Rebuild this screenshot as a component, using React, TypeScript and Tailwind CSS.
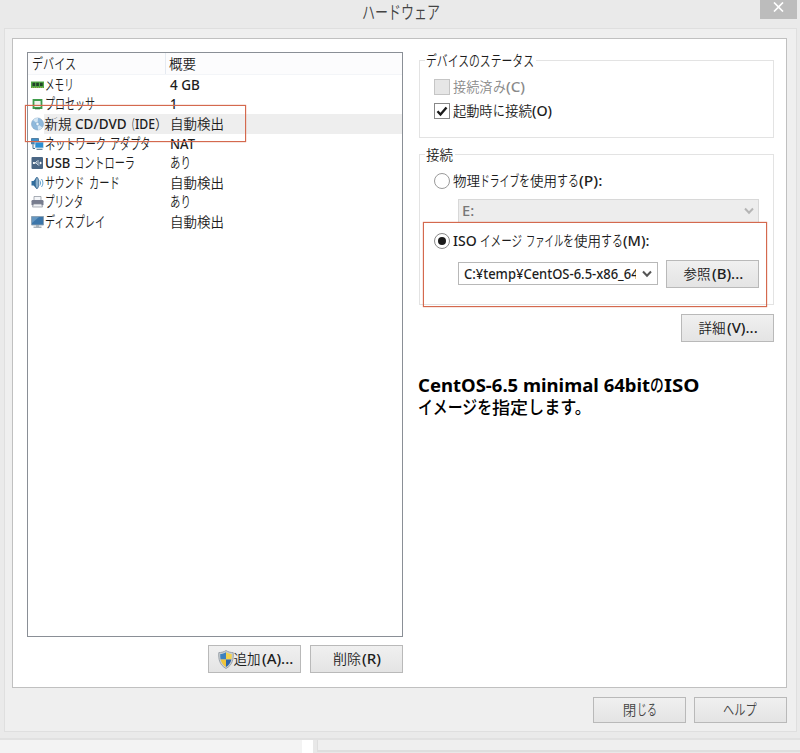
import { useLayoutEffect, useRef, useState } from 'react';
import type { ReactNode } from 'react';
import clsx from 'clsx';

type Part = [text: string, width: number];

// One run of text, condensed to the given advance width
function Run({ text, width }: { text: string; width: number }) {
  const ref = useRef<HTMLSpanElement>(null);
  const [scale, setScale] = useState(1);
  const latin = /^[\x00-\xff]+$/.test(text);
  const kana = /^[\u3040-\u30ff。]+$/.test(text);

  useLayoutEffect(() => {
    if (ref.current) setScale(width / ref.current.offsetWidth);
  }, [width, text]);

  return (
    <span className="inline-block whitespace-pre" style={{ width }}>
      <span
        ref={ref}
        className={clsx(
          'inline-block origin-left',
          latin ? 'font-(--latin-weight)' : 'font-(--cjk-weight)',
          kana && 'text-[1.1em] leading-none',
        )}
        style={{ transform: `scaleX(${scale})` }}
      >
        {text}
      </span>
    </span>
  );
}

function Label({ parts, className }: { parts: Part[]; className?: string }) {
  return (
    <span className={clsx('inline-flex shrink-0 items-baseline whitespace-pre', className)}>
      {parts.map(([text, width], i) => (
        <Run key={i} text={text} width={width} />
      ))}
    </span>
  );
}

function Button({ children, className }: { children: ReactNode; className?: string }) {
  return (
    <button
      className={clsx(
        'flex shrink-0 items-center justify-center border border-[#b9b9b9] bg-linear-to-b from-[#f0f0f0] to-[#e4e4e4]',
        className,
      )}
    >
      {children}
    </button>
  );
}

function Chevron({ color }: { color: string }) {
  return (
    <svg width="10" height="8" viewBox="0 0 10 8" fill="none">
      <path d="M1 1.5 5 5.7 9 1.5" stroke={color} strokeWidth="2" />
    </svg>
  );
}

function Shield() {
  return (
    <svg width="16" height="19" viewBox="0 0 16 19">
      <path d="M8 .5C6 2 3 2.6.8 2.6.3 9 1.500 15 8 18.500 14.500 15 15.700 9 15.200 2.600 13 2.600 10 2 8 .5Z" fill="#c9ced3" stroke="#8d969d" strokeWidth=".8" />
      <path d="M8 2.300C6.300 3.500 4.300 4 2.300 4.100 2.100 6 2.200 7.900 2.600 9.500H8Z" fill="#3d80bd" />
      <path d="M8 2.300c1.700 1.200 3.700 1.700 5.700 1.800.2 1.900.1 3.800-.3 5.400H8Z" fill="#f4d24c" />
      <path d="M2.600 9.500C3.400 12.800 5 15.200 8 16.900V9.500Z" fill="#efc43a" />
      <path d="M13.400 9.500C12.600 12.800 11 15.200 8 16.900V9.500Z" fill="#2b64ab" />
    </svg>
  );
}

const icons: Record<string, ReactNode> = {
  memory: (
    <>
      <path d="M0 3.500h13v6.500H0Z" fill="#51a846" />
      <path d="M1.500 4.700h2.700v3.300H1.500ZM5.200 4.700h2.700v3.300H5.200ZM9 4.700h2.700v3.300H9Z" fill="#23412a" />
      <path d="M1 9.500h11" stroke="#9ba84c" strokeDasharray="1 1" />
    </>
  ),
  cpu: (
    <>
      <path d="M2.500 3h8v8h-8Z" fill="#eef4ec" stroke="#3f9c4b" strokeWidth="1.800" />
      <path d="M4 11.800h5" stroke="#2e6f39" />
    </>
  ),
  disc: (
    <>
      <circle cx="6.500" cy="7" r="6" fill="#8fb9dc" stroke="#7fa3c3" strokeWidth=".6" />
      <path d="M6.500 7 2 2.900A6 6 0 0 1 7 1ZM6.500 7l5 3.500A6 6 0 0 1 7 13Z" fill="#d2e5f3" />
      <circle cx="6.500" cy="7" r="1.700" fill="#eef6fb" stroke="#6d9bc4" strokeWidth=".6" />
    </>
  ),
  network: (
    <>
      <path d="M.5 1.500h7v5.500h-7Z" fill="#3f8fc9" stroke="#436f92" strokeWidth=".8" />
      <path d="M4 5h8.500v6H4Z" fill="#2b8ed2" stroke="#d7e3ea" strokeWidth=".8" />
      <path d="M2 7.500v4h2M5.500 12.300h6" stroke="#48718e" fill="none" />
    </>
  ),
  usb: (
    <>
      <rect x=".5" y="1" width="11.500" height="12" rx="1" fill="#4a6684" />
      <path d="M2 7h8M4 7l2-2h2M5 7l2 2h1.500" stroke="#e2e9ef" strokeWidth=".8" fill="none" />
      <circle cx="2.900" cy="7" r="1.100" fill="#fff" />
      <path d="m9 5.500 2 1.500-2 1.500Z" fill="#fff" />
    </>
  ),
  sound: (
    <>
      <path d="M.5 5h2L6 1v12L2.500 9.500h-2Z" fill="#326f9f" />
      <ellipse cx="6" cy="7" rx="1.800" ry="5.700" fill="#89afcc" stroke="#2d5c85" strokeWidth=".7" />
      <path d="M8.800 4.500c1.100 1.500 1.100 3.500 0 5M10.500 3c1.900 2.500 1.900 5.500 0 8" stroke="#66a4d0" fill="none" />
    </>
  ),
  printer: (
    <>
      <path d="M3 1.500h7V6H3Z" fill="#f3f5f8" stroke="#868c98" strokeWidth=".7" />
      <rect x=".5" y="5" width="12" height="5.500" rx="1.200" fill="#777c8e" />
      <path d="M2.500 9h8l1 3h-10Z" fill="#f0f2f5" stroke="#8b909c" strokeWidth=".7" />
    </>
  ),
  display: (
    <>
      <path d="M.5 1.500h12v8.500H.5Z" fill="#3c76aa" stroke="#8ca0b1" strokeWidth=".9" />
      <path d="M1 2h7L1 8Z" fill="#6597c1" />
      <path d="M5 10h3v1.500h2.500V13h-8v-1.500H5Z" fill="#a8b2ba" />
    </>
  ),
};

const devices: { icon: string; name: Part[]; summary: Part[]; selected?: boolean }[] = [
  { icon: 'memory', name: [['メモリ', 29]], summary: [['4 GB', 30]] },
  { icon: 'cpu', name: [['プロセッサ', 50]], summary: [['1', 7.5]] },
  {
    icon: 'disc',
    name: [['新規', 27], [' CD/DVD', 55], ['（', 8], ['IDE', 20], ['）', 13]],
    summary: [['自動検出', 54]],
    selected: true,
  },
  { icon: 'network', name: [['ネットワーク', 61], [' ', 4], ['アダプタ', 40]], summary: [['NAT', 25]] },
  { icon: 'usb', name: [['USB ', 29], ['コントローラ', 61]], summary: [['あり', 21]] },
  { icon: 'sound', name: [['サウンド', 39], [' ', 5], ['カード', 31]], summary: [['自動検出', 54]] },
  { icon: 'printer', name: [['プリンタ', 38]], summary: [['あり', 21]] },
  { icon: 'display', name: [['ディスプレイ', 60]], summary: [['自動検出', 54]] },
];

function DeviceList() {
  return (
    <div className="h-[585px] w-[376px] border border-[#8a8f96] bg-white">
      <div className="flex h-[22px] items-center border-b border-[#f3f5f8] bg-[#fcfcfd]">
        <div className="flex h-full w-[138px] items-center border-r border-[#e5eaf1] pl-[4px]">
          <Label parts={[['デバイス', 44]]} />
        </div>
        <Label parts={[['概要', 27]]} className="pl-[3px]" />
      </div>
      {devices.map((d, i) => (
        <div key={i} className="flex h-[19.6px] items-center pl-[3px]">
          <svg width="13" height="14" viewBox="0 0 13 14" className="shrink-0">
            {icons[d.icon]}
          </svg>
          <div className={clsx('flex h-full flex-1 items-center', d.selected && 'bg-[#eeeeee]')}>
            <div className="flex w-[126px] shrink-0 pl-[0.5px]">
              <Label parts={d.name} />
            </div>
            <Label parts={d.summary} />
          </div>
        </div>
      ))}
    </div>
  );
}

function Group({ legend, className, children }: { legend: Part[]; className?: string; children: ReactNode }) {
  return (
    <div className={clsx('border border-[#e3e3e3]', className)}>
      <div className="-mt-[10px] ml-[5px] flex h-5 w-fit items-center bg-white pr-[2px] pl-px">
        <Label parts={legend} />
      </div>
      {children}
    </div>
  );
}

export default function App() {
  return (
    <div className="relative flex h-[753px] w-[800px] flex-col overflow-hidden bg-[#eaeaea] font-['Noto_Sans','Noto_Sans_CJK_JP',sans-serif] text-[13.5px] leading-5 text-[#1d1d1d] [--cjk-weight:350] [--latin-weight:500]">
      <header className="flex h-7 shrink-0 justify-end">
        <div className="flex w-[398px] pt-[3px] text-[16.5px] leading-5 text-[#444]">
          <Label parts={[['ハードウェア', 78]]} />
        </div>
        <button className="mr-[3px] flex h-[19px] w-[37px] items-start justify-center bg-[#bcbcbc] pt-[2px]">
          <svg width="11" height="10" viewBox="0 0 11 10">
            <path d="m1 .5 9 9m0-9-9 9" stroke="#fff" strokeWidth="1.700" />
          </svg>
        </button>
      </header>

      <div className="ml-1 h-[704px] w-[793px] shrink-0 border border-[#dfdfdf] bg-[#efefef] px-[7px] pt-[9px]">
        <div className="flex h-[650px] w-[775px] border border-[#c0c0c0] bg-white pt-[13px] pl-[14px]">
          <div className="w-[376px] shrink-0">
            <DeviceList />
            <div className="mt-2 flex justify-end gap-[9px]">
              <Button className="h-[28px] w-[93px]">
                <Shield />
                <Label parts={[['追加', 27], ['(A)...', 31]]} />
              </Button>
              <Button className="h-[28px] w-[93px]">
                <Label parts={[['削除', 28], ['(R)', 19]]} className="-ml-px" />
              </Button>
            </div>
          </div>

          <div className="ml-4 w-[355px] shrink-0 pt-2">
            <Group legend={[['デバイスのステータス', 108]]} className="h-[78px]">
              <div className="mt-[6px] flex h-5 items-center pl-[14px] text-[#8a8a8a]">
                <span className="mr-[3px] size-4 border border-[#c5c5c5] bg-[#e6e6e6]" />
                <Label parts={[['接続済', 40], ['み', 13], ['(C)', 19]]} />
              </div>
              <div className="mt-1 flex h-5 items-center pl-[14px]">
                <span className="mr-[3px] flex size-4 items-center justify-center border border-[#888] bg-white">
                  <svg width="12" height="11" viewBox="0 0 12 11" fill="none">
                    <path d="M1.500 5.200 4.500 8.500 10.500 1.500" stroke="#1b1b1b" strokeWidth="2.400" />
                  </svg>
                </span>
                <Label parts={[['起動時', 40], ['に', 12], ['接続', 27], ['(O)', 20]]} />
              </div>
            </Group>

            <Group legend={[['接続', 27]]} className="mt-4 h-[151px]">
              <div className="mt-[6px] flex h-5 items-center pl-[14px]">
                <span className="mr-[3px] size-4 rounded-full border border-[#9a9a9a]" />
                <Label parts={[['物理', 27], ['ドライブ', 39], ['を', 11], ['使用', 27], ['する', 22], ['(P):', 23]]} />
              </div>
              <div className="mt-2 ml-[38px] flex h-[24px] w-[301px] items-center justify-between border border-[#d8d8d8] bg-[#ededed] pr-1 pl-[3px] text-[#777]">
                <Label parts={[['E:', 12]]} />
                <Chevron color="#b5b5b5" />
              </div>
              <div className="mt-[8px] flex h-5 items-center pl-[14px]">
                <span className="mr-[3px] flex size-4 items-center justify-center rounded-full border border-[#888]">
                  <span className="size-2 rounded-full bg-[#1b1b1b]" />
                </span>
                <Label
                  parts={[['ISO ', 27], ['イメージ', 42], [' ', 4], ['ファイル', 37], ['を', 11], ['使用', 27], ['する', 22], ['(M):', 27]]}
                />
              </div>
              <div className="mt-[9px] ml-[38px] flex items-start">
                <div className="mt-[2px] flex h-[23px] w-[200px] items-center justify-between border border-[#b8b8b8] bg-white pr-[5px] pl-[5px]">
                  <span className="flex h-5 w-[172px] overflow-hidden">
                    <Label parts={[['C:¥temp¥CentOS-6.5-x86_64', 175]]} />
                  </span>
                  <Chevron color="#555" />
                </div>
                <Button className="ml-2 h-[28px] w-[93px]">
                  <Label parts={[['参照', 27], ['(B)...', 31]]} />
                </Button>
              </div>
            </Group>

            <div className="mt-[9px] flex justify-end">
              <Button className="h-[28px] w-[93px]">
                <Label parts={[['詳細', 27], ['(V)...', 31]]} />
              </Button>
            </div>

            <div className="mt-[33px] -ml-px flex flex-col text-[17px] leading-[22px] text-black [--cjk-weight:500] [--latin-weight:700]">
              <Label parts={[['CentOS-6.5 minimal 64bit', 232], ['の', 14], ['ISO', 35]]} className="h-[22px]" />
              <Label parts={[['イメージを', 74], ['指定', 36], ['します。', 63]]} className="h-[22px]" />
            </div>
          </div>
        </div>

        <div className="mt-[9px] mr-[2px] flex justify-end gap-2">
          <Button className="h-[26px] w-[93px] text-[#444]">
            <Label parts={[['閉', 14], ['じる', 20]]} />
          </Button>
          <Button className="h-[26px] w-[93px] text-[#444]">
            <Label parts={[['ヘルプ', 34]]} className="-ml-px" />
          </Button>
        </div>
      </div>

      {/* Windows peeking out below the dialog */}
      <div className="mt-[6px] flex h-[15px] shrink-0 border-t-2 border-[#e1e1e1] bg-[#e8e8e8]">
        <div className="w-[302px] bg-[#f3f3f3]" />
        <div className="w-[11px] bg-white" />
        <div className="ml-1 h-3 flex-1 border-b-2 border-l border-[#dedede] bg-[#efefef]" />
      </div>

      {/* Highlight frames */}
      <div className="absolute top-[105px] left-[25px] h-[37px] w-[221px] border border-[#d4694e] shadow-[0_0_1px_#d4694e]" />
      <div className="absolute top-[222px] left-[423px] h-[85px] w-[344px] border border-[#d4694e] shadow-[0_0_1px_#d4694e]" />
    </div>
  );
}
